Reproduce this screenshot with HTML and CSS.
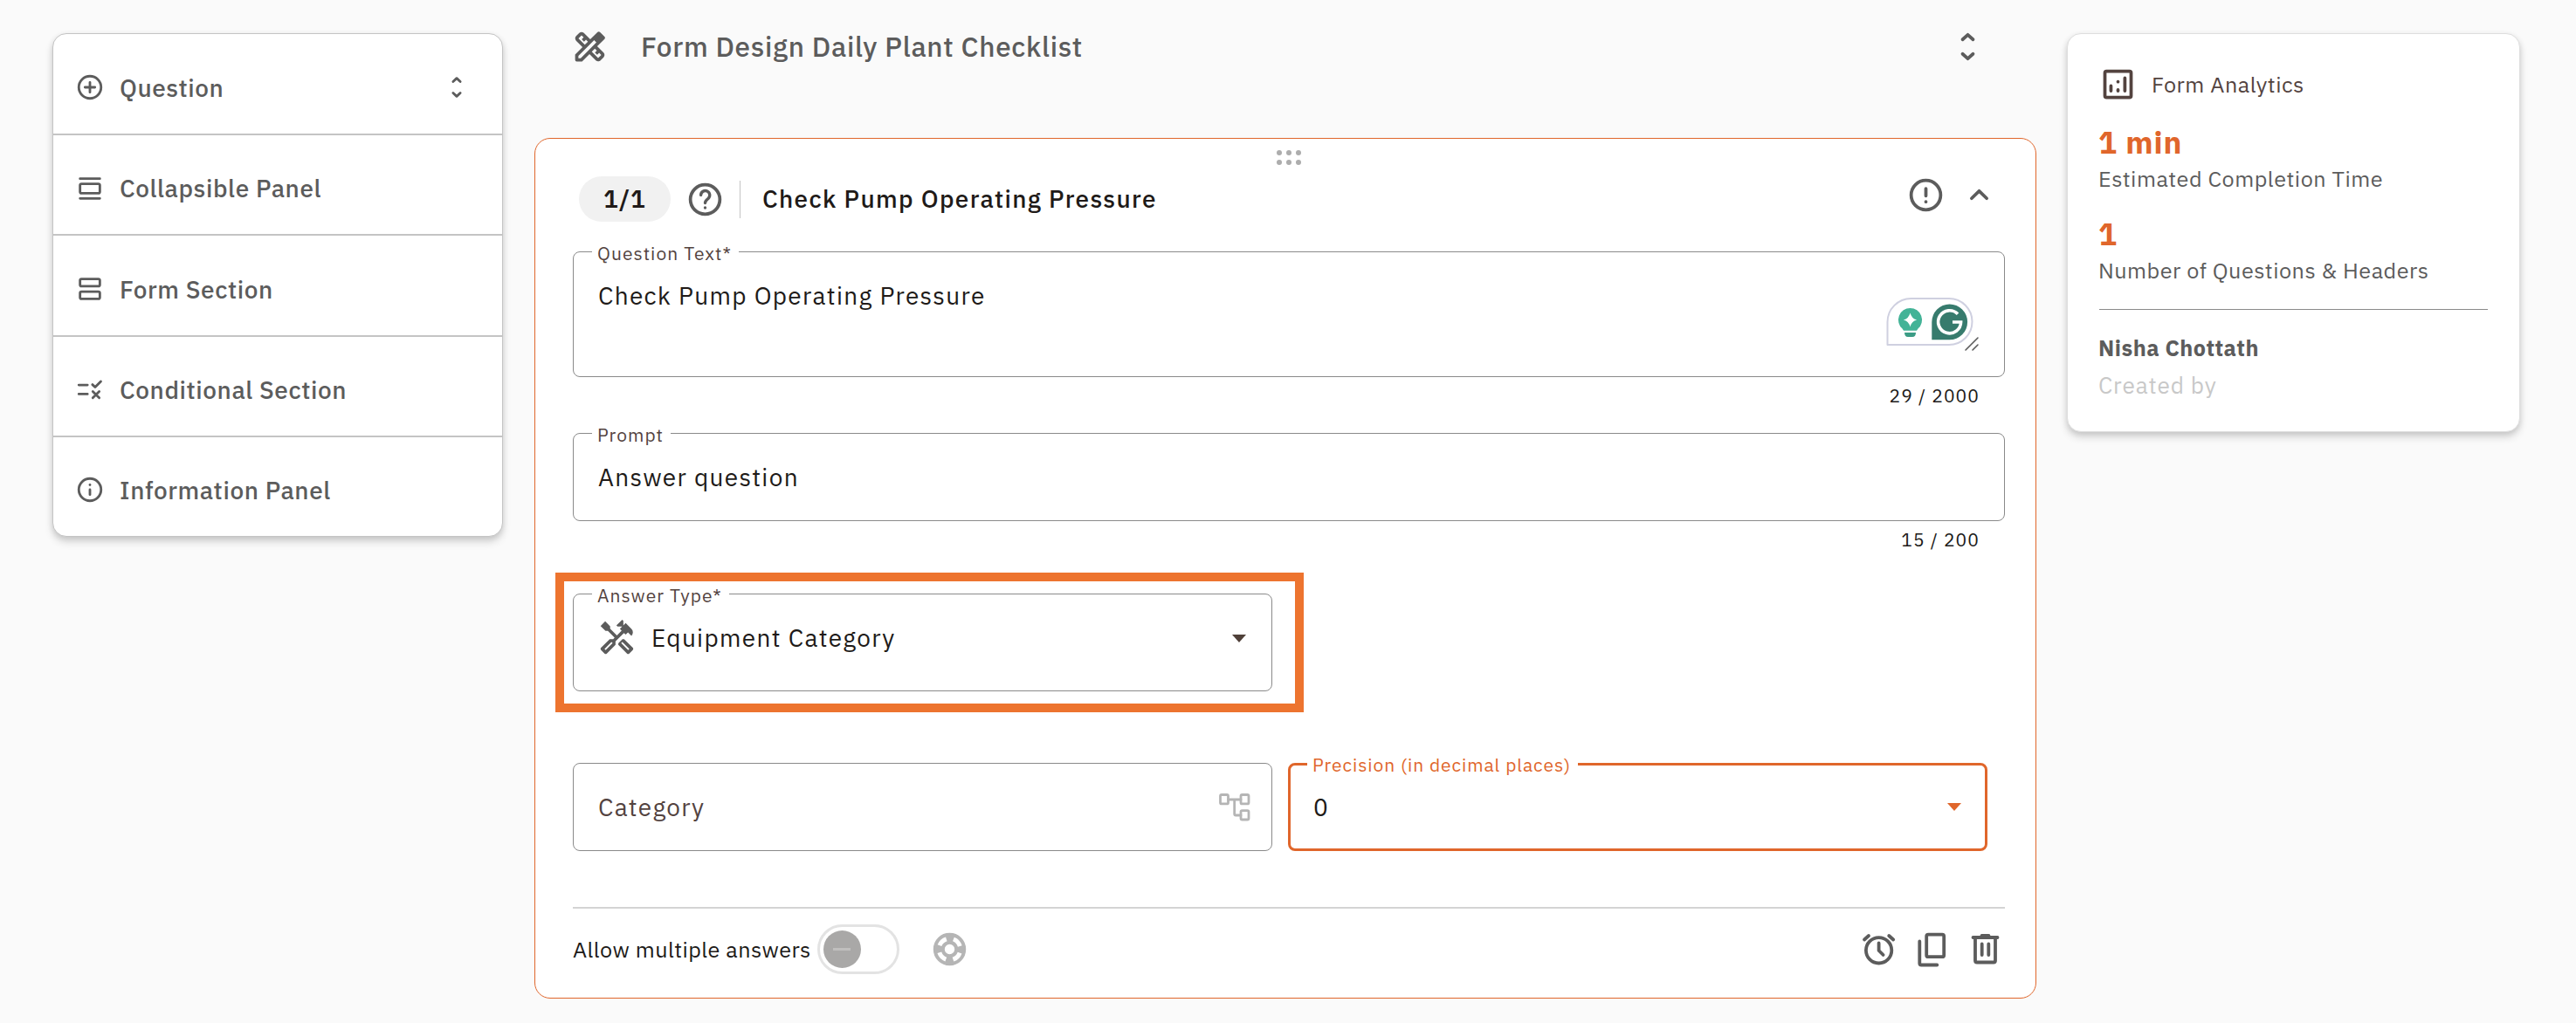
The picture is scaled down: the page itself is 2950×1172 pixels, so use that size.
FILE: index.html
```html
<!DOCTYPE html>
<html lang="en">
<head>
  <meta charset="UTF-8">
  <meta name="viewport" content="width=device-width, initial-scale=1.0">
  <title>Form Design Daily Plant Checklist</title>
  <link rel="stylesheet" href="styles.css">
</head>
<body>
  <div class="page">
    <!-- Left menu -->
    <nav class="menu">
      <div class="menu-item">
        <svg class="icon-sm" viewBox="0 0 24 24"><circle cx="12" cy="12" r="9"/><path d="M12 8v8M8 12h8"/></svg>
        <span>Question</span>
        <svg class="icon-sm push-right" viewBox="0 0 24 24"><path d="M9.1 7.4L12 4.7l2.9 2.7M9.1 16.6l2.9 2.7 2.9-2.7"/></svg>
      </div>
      <div class="menu-item">
        <svg class="icon-sm" viewBox="0 0 24 24"><path d="M4 4h16M4 20h16"/><rect x="4" y="8.2" width="16" height="7.6" rx="1.2"/></svg>
        <span>Collapsible Panel</span>
      </div>
      <div class="menu-item">
        <svg class="icon-sm" viewBox="0 0 24 24"><rect x="4" y="4" width="16" height="5.8" rx="1.2"/><rect x="4" y="14.2" width="16" height="5.8" rx="1.2"/></svg>
        <span>Form Section</span>
      </div>
      <div class="menu-item">
        <svg class="icon-sm" viewBox="0 0 24 24"><path d="M3 8.5h7M3 15.8h7M14 8.2l2.2 2.1 4.6-4.6M14.3 13.7l5.2 5.2M19.5 13.7l-5.2 5.2"/></svg>
        <span>Conditional Section</span>
      </div>
      <div class="menu-item">
        <svg class="icon-sm" viewBox="0 0 24 24"><circle cx="12" cy="12" r="9"/><path d="M12 12v4M12 8v.1"/></svg>
        <span>Information Panel</span>
      </div>
    </nav>

    <!-- Form editor -->
    <main class="editor">
      <header class="editor-header">
        <svg class="icon icon-fill" viewBox="0 0 24 24"><path d="M20.97 7.27c.39-.39.39-1.02 0-1.41l-2.83-2.83c-.39-.39-1.02-.39-1.41 0l-4.49 4.49-3.89-3.89c-.78-.78-2.05-.78-2.83 0l-1.9 1.9c-.78.78-.78 2.05 0 2.83l3.89 3.89L3 16.76V20q0 1 1 1h3.24l4.52-4.52 3.89 3.89c.95.95 2.23.6 2.83 0l1.9-1.9c.78-.78.78-2.05 0-2.83l-3.89-3.89 4.48-4.48zM5.04 6.94l1.89-1.9L8.2 6.31 7.02 7.5l1.41 1.41 1.19-1.19 1.2 1.2-1.9 1.9-3.88-3.88zm11.23 7.44l-1.19 1.19 1.41 1.41 1.19-1.19 1.27 1.27-1.9 1.9-3.89-3.89 1.9-1.9 1.21 1.21zM6.41 19H5v-1.41l9.61-9.61 1.3 1.3.11.11L6.41 19z"/></svg>
        <h1>Form Design Daily Plant Checklist</h1>
        <svg class="icon push-right" viewBox="0 0 24 24"><path d="M8.8 7.6L12 4.7l3.2 2.9M8.8 16.4l3.2 2.9 3.2-2.9"/></svg>
      </header>

      <section class="card">
        <div class="drag-handle">
          <i></i><i></i><i></i>
          <i></i><i></i><i></i>
        </div>

        <div class="card-head">
          <span class="pill">1/1</span>
          <svg class="icon" viewBox="0 0 24 24"><circle cx="12" cy="12" r="9"/><path class="thin" d="M9.4 9.3a2.7 2.7 0 1 1 4.5 2.1c-1.2 1-1.9 1.5-1.9 2.7M12 17v.1"/></svg>
          <span class="divider"></span>
          <h2>Check Pump Operating Pressure</h2>
          <div class="head-actions">
            <svg class="icon" viewBox="0 0 24 24"><circle cx="12" cy="12" r="9"/><path d="M12 8v4.4M12 16v.1"/></svg>
            <svg class="icon" viewBox="0 0 24 24"><path d="M7.4 14l4.6-4.5 4.6 4.5"/></svg>
          </div>
        </div>

        <div class="field field-area">
          <label>Question Text*</label>
          <span class="value">Check Pump Operating Pressure</span>
          <svg class="assistant" viewBox="0 0 110 66">
            <path class="assistant-frame" d="M3.5 56V30A27 27 0 0 1 30.5 3H74a26.5 26.5 0 0 1 0 53z"/>
            <path class="bulb" d="M29.5 14a13.5 13.5 0 0 1 9 23.6L37 39.7H22l-1.5-2.1A13.5 13.5 0 0 1 29.5 14z"/>
            <path class="bulb-base" d="M23 42h13q0 5-4 5h-5q-4 0-4-5z"/>
            <path class="spark" d="M29.5 19.5q1.6 6.4 7.6 8-6 1.6-7.6 8-1.6-6.4-7.6-8 6-1.6 7.6-8z"/>
            <path class="badge" d="M54.3 50.3V30A20.4 20.4 0 1 1 74.7 50.3z"/>
            <path class="badge-mark" d="M84 20.8A13 13 0 1 0 87.6 30H78"/>
            <path class="resize" d="M93 62l14-14M101 62l6-6"/>
          </svg>
        </div>
        <div class="counter">29 / 2000</div>

        <div class="field">
          <label>Prompt</label>
          <span class="value">Answer question</span>
        </div>
        <div class="counter">15 / 200</div>

        <div class="highlight">
          <div class="field field-select">
            <label>Answer Type*</label>
            <svg class="icon icon-fill" viewBox="0 0 24 24"><path d="M21.67 18.17l-5.3-5.3h-.99l-2.54 2.54v.99l5.3 5.3c.39.39 1.02.39 1.41 0l2.12-2.12c.39-.38.39-1.02 0-1.41zm-2.83 1.42l-4.24-4.24.71-.71 4.24 4.24-.71.71zM17.34 10.19l1.41-1.41 2.12 2.12c1.17-1.17 1.17-3.07 0-4.24l-3.54-3.54-1.41 1.41V1.71L15.22 1l-3.54 3.54.71.71h2.83l-1.41 1.41 1.06 1.06-2.89 2.89-4.13-4.13V5.06L4.83 2.04 2 4.87 5.03 7.9h1.41l4.13 4.13-.85.85H7.6l-5.3 5.3c-.39.39-.39 1.02 0 1.41l2.12 2.12c.39.39 1.02.39 1.41 0l5.3-5.3v-2.12l5.15-5.15 1.06 1.05zm-7.98 5.15l-4.24 4.24-.71-.71 4.24-4.24.71.71z"/></svg>
            <span class="value">Equipment Category</span>
            <span class="caret"></span>
          </div>
        </div>

        <div class="row">
          <div class="field">
            <span class="value placeholder">Category</span>
            <svg class="tree" viewBox="0 0 36 32"><rect x="1.5" y="1.5" width="9" height="10.4" rx="1.5"/><rect x="25" y="1.5" width="9" height="10.4" rx="1.5"/><rect x="25" y="19.6" width="9" height="10.4" rx="1.5"/><path d="M10.5 7H25M17.7 7v16.5q0 1.5 1.5 1.5H25"/></svg>
          </div>
          <div class="field active">
            <label>Precision (in decimal places)</label>
            <span class="value">0</span>
            <span class="caret"></span>
          </div>
        </div>

        <footer class="card-footer">
          <span>Allow multiple answers</span>
          <span class="toggle"><span class="knob"></span></span>
          <svg class="ring" viewBox="0 0 45 45"><circle class="ring-body" cx="22.5" cy="22.5" r="12.2"/><circle class="ring-slots" cx="22.5" cy="22.5" r="12.3"/></svg>
          <div class="footer-actions">
            <svg class="icon-px" viewBox="0 0 45 45"><circle cx="22.6" cy="23.8" r="14.7"/><path d="M22.6 15.5v8.5l5 5M6 11.5l5-4.5M39.2 11.5l-5-4.5"/></svg>
            <svg class="icon-px" viewBox="0 0 45 45"><rect x="16.2" y="5.7" width="20" height="25.5" rx="2"/><path d="M8.3 13.5v25q0 2 2 2h18"/></svg>
            <svg class="icon-px" viewBox="0 0 45 45"><path d="M8.5 9h28M18.5 7h8M11 9v26.5q0 2 2 2h19q2 0 2-2V9M18.7 16.5v12.5M26.3 16.5v12.5"/></svg>
          </div>
        </footer>
      </section>
    </main>

    <!-- Analytics -->
    <aside class="analytics">
      <div class="analytics-title">
        <svg class="icon" viewBox="0 0 24 24"><rect x="4" y="4" width="16" height="16" rx="1"/><path d="M7.7 13v3M12 10.4v.1M12 15.4v.6M16.2 8.2v7.8"/></svg>
        <span>Form Analytics</span>
      </div>
      <div class="stat">1 min</div>
      <div class="stat-label">Estimated Completion Time</div>
      <div class="stat">1</div>
      <div class="stat-label">Number of Questions &amp; Headers</div>
      <hr>
      <div class="author">Nisha Chottath</div>
      <div class="author-label">Created by</div>
    </aside>
  </div>
</body>
</html>
```
FILE: styles.css
```css
* {
  margin: 0;
  padding: 0;
  box-sizing: border-box;
}

body {
  font-family: "IBM Plex Sans", Roboto, sans-serif;
  font-size: 28px;
  background: #fafafa;
  color: #201a18;
}

svg {
  flex-shrink: 0;
  fill: none;
  stroke: #5c5c5c;
  stroke-width: 2;
  stroke-linecap: round;
  stroke-linejoin: round;
}

.page {
  display: grid;
  grid-template-columns: 516px 1720px 518px;
  column-gap: 36px;
  align-items: start;
  height: 1172px;
  padding-left: 60px;
}

.icon {
  width: 45px;
  height: 45px;
}

.icon .thin {
  stroke-width: 1.8;
}

.icon-sm {
  width: 34px;
  height: 34px;
}

.icon-fill {
  fill: #5c5c5c;
  stroke: none;
}

.push-right {
  margin-left: auto;
}

/* Left menu */
.menu {
  margin-top: 38px;
  padding-top: 0.6px;
  background: #fff;
  border: 1px solid #c4c4c4;
  border-radius: 16px;
  box-shadow: 0 6px 10px rgba(0, 0, 0, 0.14), 0 2px 6px rgba(0, 0, 0, 0.1);
}

.menu-item {
  display: flex;
  align-items: center;
  gap: 17px;
  height: 115.4px;
  padding: 8px 35px 0 25px;
  border-bottom: 2px solid #c4c4c4;
  font-weight: 500;
  letter-spacing: 0.56px;
  color: #5c5c5c;
}

.menu-item:last-child {
  border-bottom: none;
  height: 112.6px;
}

/* Editor */
.editor-header {
  display: flex;
  align-items: center;
  gap: 36px;
  height: 107px;
  margin-bottom: 51px;
  padding: 0 56px 0 41px;
}

.editor-header h1 {
  font-size: 31.5px;
  font-weight: 500;
  letter-spacing: 0.68px;
  color: #5c5c5c;
}

.card {
  height: 986px;
  padding: 0 35px 0 43px;
  background: #fff;
  border: 1px solid #e0662b;
  border-radius: 18px;
}

.drag-handle {
  display: grid;
  grid-template-columns: repeat(3, 6px);
  grid-auto-rows: 6px;
  gap: 5px;
  justify-content: center;
  height: 43px;
  padding-top: 13px;
}

.drag-handle i {
  background: #adadad;
  border-radius: 50%;
}

.card-head {
  display: flex;
  align-items: center;
  height: 52px;
  margin-bottom: 34px;
  padding: 0 7px;
}

.pill {
  width: 105px;
  height: 52px;
  margin-right: 17px;
  border-radius: 26px;
  background: #f1f1f1;
  font-weight: 600;
  line-height: 51px;
  letter-spacing: 1px;
  text-align: center;
}

.divider {
  width: 1px;
  height: 43px;
  margin: 0 25px 0 17px;
  background: #c4c4c4;
}

.card-head h2 {
  padding-bottom: 1px;
  font-size: 28px;
  font-weight: 500;
  letter-spacing: 1.3px;
}

.head-actions {
  display: flex;
  gap: 16px;
  margin: 0 0 9px auto;
}

/* Outlined fields */
.field {
  position: relative;
  display: flex;
  align-items: center;
  height: 101px;
  padding: 0 28px;
  border: 1px solid #8a8a8a;
  border-radius: 8px;
}

.field label {
  position: absolute;
  top: -11px;
  left: 21px;
  padding: 0 8px 0 6px;
  background: #fff;
  font-size: 21px;
  line-height: 24px;
  letter-spacing: 1.06px;
  color: #53433f;
}

.value {
  line-height: 32px;
  letter-spacing: 1.31px;
}

.value.placeholder {
  padding-top: 1px;
  letter-spacing: 1.25px;
  color: #53433f;
}

.field-area {
  align-items: flex-start;
  height: 144px;
  padding-top: 34px;
}

.counter {
  height: 64px;
  padding-right: 29px;
  font-size: 21px;
  line-height: 43px;
  letter-spacing: 1.1px;
  text-align: right;
}

/* Writing assistant badge over the textarea */
.assistant {
  position: absolute;
  top: 50px;
  right: 27px;
  width: 110px;
  height: 66px;
}

.assistant-frame {
  fill: #fff;
  stroke: #cfd0e0;
}

.bulb {
  fill: #43b397;
  stroke: none;
}

.bulb-base {
  fill: #3b9c85;
  stroke: none;
}

.spark {
  fill: #fff;
  stroke: none;
}

.badge {
  fill: #377b6d;
  stroke: none;
}

.badge-mark {
  stroke: #fff;
  stroke-width: 3.6;
  stroke-linecap: butt;
  stroke-linejoin: miter;
}

.resize {
  stroke-width: 1.6;
}

.caret {
  margin-left: auto;
  border: solid transparent;
  border-width: 9px 8.5px 0;
  border-top-color: #4f4039;
}

.highlight {
  width: 857px;
  height: 160px;
  margin: -5px 0 58px -20px;
  padding: 14px 26px 14px 10px;
  border: 10px solid #ed742f;
}

.field-select {
  height: 112px;
  padding: 0 29px 10px 27px;
}

.field-select .icon {
  margin-bottom: 1px;
}

.field-select .value {
  margin-left: 17px;
}

.row {
  display: flex;
  gap: 18px;
}

.row .field {
  width: 801px;
}

.tree {
  width: 36px;
  height: 32px;
  margin: 0 -4px 0 auto;
  stroke: #b5b5b5;
  stroke-width: 2.8;
}

.field.active {
  padding: 0 27px 0 26px;
  border: 3px solid #e0662b;
}

.field.active label {
  top: -13px;
  left: 19px;
  letter-spacing: 0.94px;
  color: #e0662b;
}

.field.active .caret {
  border-top-color: #e0662b;
}

/* Card footer */
.card-footer {
  display: flex;
  align-items: center;
  height: 95px;
  margin-top: 64px;
  border-top: 2px solid #d4d4d4;
  font-size: 25.2px;
  letter-spacing: 0.46px;
}

.toggle {
  display: flex;
  align-items: center;
  width: 94px;
  height: 57px;
  margin: 0 35px 0 7px;
  padding-left: 4px;
  border: 3px solid #e3e3e3;
  border-radius: 29px;
}

.knob {
  display: flex;
  align-items: center;
  justify-content: center;
  width: 43px;
  height: 43px;
  border-radius: 50%;
  background: #a9a8a7;
}

.knob::after {
  content: "";
  width: 20px;
  height: 3px;
  background: #c0bfbe;
}

.ring {
  width: 45px;
  height: 45px;
}

.ring-body {
  stroke: #b5b5b5;
  stroke-width: 13;
}

.ring-slots {
  stroke: #fff;
  stroke-width: 5;
  stroke-linecap: butt;
  stroke-dasharray: 11 8.32;
  stroke-dashoffset: -4.16;
}

.footer-actions {
  display: flex;
  gap: 16px;
  margin-left: auto;
}

.icon-px {
  width: 45px;
  height: 45px;
  stroke-width: 3.8;
}

/* Analytics */
.analytics {
  height: 457px;
  margin: 38px 0 0 -1px;
  padding: 35px 36px 0 35px;
  background: #fff;
  border: 1px solid #dedede;
  border-radius: 16px;
  box-shadow: 0 6px 10px rgba(0, 0, 0, 0.14), 0 2px 6px rgba(0, 0, 0, 0.1);
}

.analytics-title {
  display: flex;
  align-items: center;
  gap: 16px;
  height: 45px;
  margin-bottom: 1px;
  font-size: 25.2px;
  letter-spacing: 0.5px;
  color: #53433f;
}

.analytics-title svg {
  stroke: #53433f;
}

.stat {
  height: 44px;
  font-size: 35px;
  font-weight: 700;
  line-height: 87px;
  letter-spacing: 1px;
  color: #e0662b;
}

.stat-label {
  height: 61px;
  font-size: 25.2px;
  line-height: 82px;
  letter-spacing: 0.5px;
  color: #5c5c5c;
}

.analytics hr {
  height: 1px;
  margin: 24px 0 0 1px;
  border: none;
  background: #8a8a8a;
}

.author {
  margin-top: 23px;
  font-size: 25.2px;
  font-weight: 700;
  line-height: 42px;
  letter-spacing: 0.5px;
  color: #5c5c5c;
}

.author-label {
  font-size: 26.2px;
  line-height: 42px;
  letter-spacing: 0.85px;
  color: #c8c8c8;
}
```
